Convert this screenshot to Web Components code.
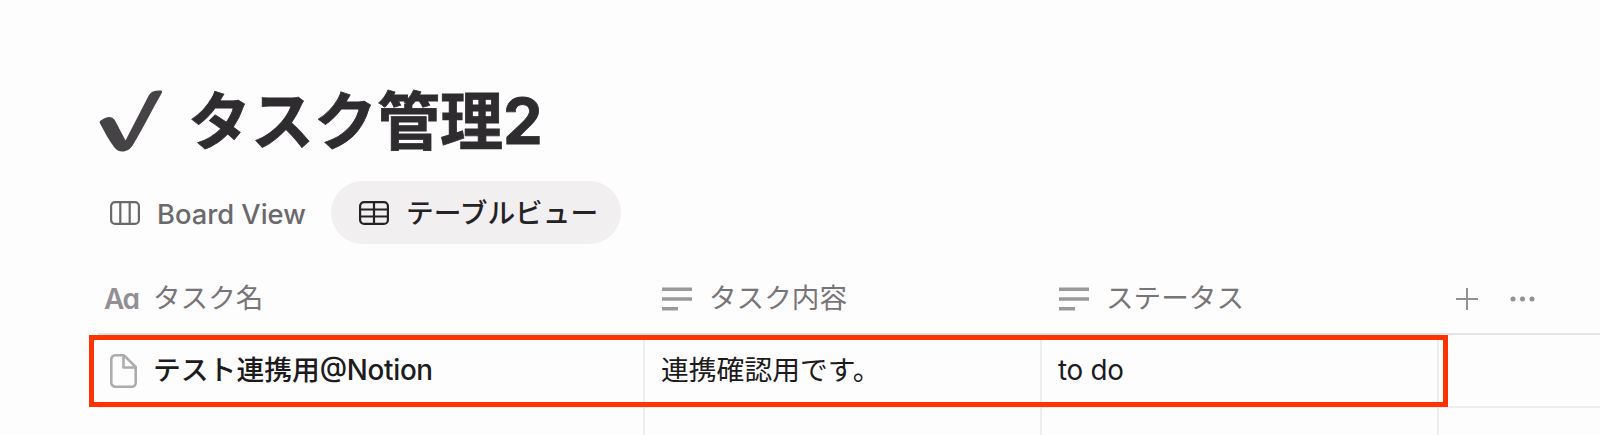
<!DOCTYPE html>
<html lang="ja">
<head>
<meta charset="utf-8">
<title>タスク管理2</title>
<style>
    body {
        margin: 0;
        width: 1600px;
        height: 435px;
        overflow: hidden;
        background-color: #fdfdfd;
        font-family: Inter, 'Noto Sans CJK JP', sans-serif;
        color: #1d1b1d;
    }
</style>
</head>
<body>
<task-page>
    <page-title slot="title">タスク管理2</page-title>
    <view-tab slot="tabs" icon="board">Board View</view-tab>
    <view-tab slot="tabs" icon="table" active>テーブルビュー</view-tab>
    <task-table></task-table>
</task-page>

<script>
const icons = {
    check: `<svg width="64" height="64" viewBox="0 0 64 64"><path d="M5 28.500C9 26 13.500 26.500 16 30.500L26.500 50.500L50 5C52 1.500 56 .2 62 .5C63.300 .6 63.200 2 62.500 3.500C53 20 44 38 34.500 54C29.500 63 20 64 15 57C9.500 49.500 5 41 .8 33C-.2 31.200 2.500 30 5 28.500Z" fill="#454346"/></svg>`,
    board: `<svg width="30" height="24" viewBox="0 0 30 24" fill="none" stroke="currentColor" stroke-width="2.200"><rect x="1.100" y="1.100" width="27.800" height="21.800" rx="4"/><path d="M10.300 1V23M19.700 1V23"/></svg>`,
    table: `<svg width="30" height="24" viewBox="0 0 30 24" fill="none" stroke="currentColor" stroke-width="2.200"><rect x="1.100" y="1.100" width="27.800" height="21.800" rx="4"/><path d="M15 1V23M1 8.500H29M1 15.500H29"/></svg>`,
    text: `<svg width="30" height="24" viewBox="0 0 30 24" fill="#9a999b"><path d="M0 .5H30V4H0ZM0 10.200H30V13.800H0ZM0 20H16V23.500H0Z"/></svg>`,
    page: `<svg width="27" height="34" viewBox="0 0 27 34" fill="none" stroke="#adabad" stroke-width="2.600" stroke-linejoin="round"><path d="M5.300 1.300H14L25.700 13V28.700A4 4 0 0 1 21.700 32.700H5.300A4 4 0 0 1 1.300 28.700V5.300A4 4 0 0 1 5.300 1.300Z"/><path d="M13.500 1.500V13.500H25.500"/></svg>`,
    plus: `<svg width="22" height="22" viewBox="0 0 22 22" stroke="#929093" stroke-width="2"><path d="M11 0V22M0 11H22"/></svg>`,
    dots: `<svg width="26" height="6" viewBox="0 0 26 6" fill="#929093"><circle cx="3" cy="3" r="2.500"/><circle cx="12.500" cy="3" r="2.500"/><circle cx="22" cy="3" r="2.500"/></svg>`
}

const taskPage = document.createElement('template')
taskPage.innerHTML = `
<style>
    :host {
        display: flex;
        flex-direction: column;
        box-sizing: border-box;
        position: relative;
        height: 435px;
        padding: 73px 0 0 98px;
        overflow: hidden;
    }
    .tabs {
        display: flex;
        height: 63px;
        margin-top: 12px;
        margin-bottom: 22px;
    }
    .highlight {
        position: absolute;
        box-sizing: border-box;
        left: 89px;
        top: 335px;
        width: 1359px;
        height: 72px;
        border: 5px solid #ff3300;
    }
</style>
<slot name="title"></slot>
<div class="tabs"><slot name="tabs"></slot></div>
<slot></slot>
<div class="highlight"></div>
`

class TaskPage extends HTMLElement {
    constructor() {
        super()
        this.attachShadow({ mode: "open" })
        this.shadowRoot.appendChild(taskPage.content.cloneNode(true))
    }
}

const pageTitle = document.createElement('template')
pageTitle.innerHTML = `
<style>
    :host {
        display: flex;
        align-items: center;
        gap: 25px;
        height: 96px;
        padding-left: 1px;
        color: #2e2c2f;
    }
    svg {
        display: block;
        margin-top: 1px;
    }
    h1 {
        margin: 0;
        font-size: 63px;
        font-weight: 700;
        line-height: 96px;
        white-space: nowrap;
        -webkit-text-stroke: 0.8px #2e2c2f;
    }
</style>
${icons.check}
<h1><slot></slot></h1>
`

class PageTitle extends HTMLElement {
    constructor() {
        super()
        this.attachShadow({ mode: "open" })
        this.shadowRoot.appendChild(pageTitle.content.cloneNode(true))
    }
}

class ViewTab extends HTMLElement {
    constructor() {
        super()
        this.attachShadow({ mode: "open" })
    }

    connectedCallback() {
        this.shadowRoot.innerHTML = `
        <style>
            :host {
                display: flex;
                align-items: center;
                box-sizing: border-box;
                gap: 17px;
                width: 233px;
                height: 63px;
                padding-left: 12px;
                border-radius: 32px;
                color: #6b696c;
                font-size: 27.300px;
                font-weight: 500;
                white-space: nowrap;
            }
            :host([active]) {
                width: 290px;
                padding-left: 28px;
                background-color: #f2eff1;
                color: #252225;
                font-size: 27.700px;
            }
            svg {
                flex: none;
            }
            span {
                padding-top: 3px;
            }
            :host([active]) span {
                padding-top: 0;
                padding-bottom: 3px;
            }
        </style>
        ${icons[this.getAttribute("icon")]}
        <span><slot></slot></span>
        `
    }
}

const tableHeader = document.createElement('template')
tableHeader.innerHTML = `
<style>
    :host {
        display: flex;
        align-items: center;
        box-sizing: border-box;
        padding-left: 17px;
        padding-bottom: 2px;
        gap: 17px;
        color: #777578;
        font-size: 27.600px;
        white-space: nowrap;
    }
    :host([first]) {
        padding-left: 6px;
        gap: 13px;
    }
    svg {
        display: block;
    }
    .aa {
        width: 36px;
        padding-top: 1px;
        color: #929093;
        font-family: Inter, sans-serif;
        font-size: 28px;
        font-weight: 600;
        letter-spacing: -1.500px;
        font-feature-settings: "ss01", "cv11";
    }
    .label {
        padding-bottom: 6px;
    }
</style>
<span class="icon"></span>
<span class="label"><slot></slot></span>
`

class TableHeader extends HTMLElement {
    constructor() {
        super()
        this.attachShadow({ mode: "open" })
    }

    connectedCallback() {
        this.shadowRoot.appendChild(tableHeader.content.cloneNode(true))
        const icon = this.shadowRoot.querySelector(".icon")
        if (this.hasAttribute("first")) {
            icon.className = "aa"
            icon.textContent = "Aa"
        } else {
            icon.innerHTML = icons.text
        }
    }
}

const tableCell = document.createElement('template')
tableCell.innerHTML = `
<style>
    :host {
        display: flex;
        align-items: center;
        box-sizing: border-box;
        padding-left: 16px;
        border-right: 2px solid #efedef;
        font-size: 27.800px;
        white-space: nowrap;
    }
    :host([first]) {
        padding-left: 12px;
        gap: 16px;
        font-weight: 500;
    }
    svg {
        flex: none;
    }
    span {
        padding-bottom: 6px;
    }
    :host([latin]) span {
        padding-bottom: 1px;
    }
</style>
<span><slot></slot></span>
`

class TableCell extends HTMLElement {
    constructor() {
        super()
        this.attachShadow({ mode: "open" })
    }

    connectedCallback() {
        this.shadowRoot.appendChild(tableCell.content.cloneNode(true))
        if (this.hasAttribute("icon")) {
            this.shadowRoot.querySelector("span").insertAdjacentHTML("beforebegin", icons[this.getAttribute("icon")])
        }
    }
}

const taskTable = document.createElement('template')
taskTable.innerHTML = `
<style>
    :host {
        display: block;
    }
    .row {
        display: grid;
        grid-template-columns: 547px 397px 397px 1fr;
        box-sizing: border-box;
        height: 73px;
        border-bottom: 2px solid #efedef;
    }
    .head {
        height: 69px;
        border-bottom-color: #e5e3e5;
    }
    .actions {
        display: flex;
        align-items: center;
        gap: 32px;
        padding-left: 17px;
        padding-bottom: 2px;
    }
    .latin {
        letter-spacing: -0.300px;
        font-feature-settings: "case";
    }
</style>
<div class="row head">
    <table-header first>タスク名</table-header>
    <table-header>タスク内容</table-header>
    <table-header>ステータス</table-header>
    <div class="actions">${icons.plus}${icons.dots}</div>
</div>
<div class="row">
    <table-cell first icon="page">テスト連携用<span class="latin">@Notion</span></table-cell>
    <table-cell>連携確認用です。</table-cell>
    <table-cell latin><span class="latin">to do</span></table-cell>
</div>
<div class="row">
    <table-cell></table-cell>
    <table-cell></table-cell>
    <table-cell></table-cell>
</div>
`

class TaskTable extends HTMLElement {
    constructor() {
        super()
        this.attachShadow({ mode: "open" })
        this.shadowRoot.appendChild(taskTable.content.cloneNode(true))
    }
}

window.customElements.define('task-page', TaskPage)
window.customElements.define('page-title', PageTitle)
window.customElements.define('view-tab', ViewTab)
window.customElements.define('table-header', TableHeader)
window.customElements.define('table-cell', TableCell)
window.customElements.define('task-table', TaskTable)
</script>
</body>
</html>
